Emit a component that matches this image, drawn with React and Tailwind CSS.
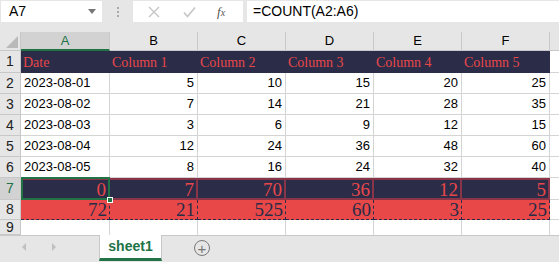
import React from "react";

const cols = ["A", "B", "C", "D", "E", "F"];
const widths = ["w-[89px]", "w-[88px]", "w-[88px]", "w-[88px]", "w-[88px]", "w-[88px]"];

const data = [
    ["2023-08-01", 5, 10, 15, 20, 25],
    ["2023-08-02", 7, 14, 21, 28, 35],
    ["2023-08-03", 3, 6, 9, 12, 15],
    ["2023-08-04", 12, 24, 36, 48, 60],
    ["2023-08-05", 8, 16, 24, 32, 40],
];
const totals = [0, 7, 70, 36, 12, 5];
const products = [72, 21, 525, 60, 3, 25];

const sans = { fontFamily: "'Liberation Sans', Arial, sans-serif" };
const serif = { fontFamily: "'Liberation Serif', 'Times New Roman', serif" };

function RowHead({ n, active }) {
    return (
        <div className={`w-[21px] shrink-0 flex items-center justify-center border-r border-b border-[#c8c8c8] text-[14px] ${active ? "bg-[#d2d2d2] text-[#217346]" : "bg-[#e6e6e6] text-[#222]"}`}>
            {n}
        </div>
    );
}

export default function App() {
    return (
        <div className="w-[559px] h-[262px] overflow-hidden bg-white text-black relative" style={sans}>
            {/* formula bar */}
            <div className="h-[32px] bg-[#e6e6e6] flex items-start pt-[1px]">
                <div className="w-[101px] h-[21px] ml-[1px] bg-white flex items-center justify-between pl-[8px] pr-[6px] text-[14px]">
                    <span>A7</span>
                    <span className="w-0 h-0 border-l-[4px] border-r-[4px] border-t-[5px] border-l-transparent border-r-transparent border-t-[#777]" />
                </div>
                <div className="w-[31px] h-[21px] flex flex-col items-center justify-center gap-[2px]">
                    <span className="w-[2px] h-[2px] bg-[#aaa]" />
                    <span className="w-[2px] h-[2px] bg-[#aaa]" />
                    <span className="w-[2px] h-[2px] bg-[#aaa]" />
                </div>
                <div className="w-[110px] h-[21px] bg-white flex items-center">
                    <svg width="12" height="12" viewBox="0 0 12 12" className="ml-[15px]">
                        <path d="M1 1 L11 11 M11 1 L1 11" stroke="#c6c6c6" strokeWidth="1.4" />
                    </svg>
                    <svg width="13" height="12" viewBox="0 0 13 12" className="ml-[23px]">
                        <path d="M1 6.5 L4.5 10.5 L12 1.5" stroke="#c6c6c6" strokeWidth="1.6" fill="none" />
                    </svg>
                    <span className="ml-[21px] text-[13px] italic text-[#555]" style={serif}>f<span className="text-[10px]">x</span></span>
                </div>
                <div className="flex-1 h-[21px] ml-[4px] bg-white flex items-center pl-[6px] text-[14px]">=COUNT(A2:A6)</div>
            </div>

            {/* column headers */}
            <div className="flex h-[19px]">
                <div className="w-[21px] shrink-0 bg-[#e6e6e6] border-r border-b border-[#c8c8c8] relative">
                    <svg width="12" height="12" className="absolute right-[2px] bottom-[2px]" viewBox="0 0 12 12">
                        <path d="M12 0 L12 12 L0 12 Z" fill="#b9b9b9" />
                    </svg>
                </div>
                {cols.map((c, i) => (
                    <div key={c} className={`${widths[i]} shrink-0 flex items-center justify-center text-[13px] border-r border-[#c8c8c8] ${i === 0 ? "bg-[#d2d2d2] text-[#217346] border-b-2 border-b-[#217346]" : "bg-[#e6e6e6] border-b"}`}>
                        {c}
                    </div>
                ))}
                <div className="flex-1 bg-[#e6e6e6] border-b border-[#c8c8c8]" />
            </div>

            {/* row 1 */}
            <div className="flex h-[22px]">
                <RowHead n={1} />
                {["Date", "Column 1", "Column 2", "Column 3", "Column 4", "Column 5"].map((t, i) => (
                    <div key={t} className={`${widths[i]} shrink-0 bg-[#2a2c48] text-[#e8474a] text-[14px] flex items-center pl-[2px]`} style={serif}>
                        {t}
                    </div>
                ))}
                <div className="flex-1 border-b border-[#d4d4d4]" />
            </div>

            {data.map((r, ri) => (
                <div key={ri} className="flex h-[21px]">
                    <RowHead n={ri + 2} />
                    {r.map((v, i) => (
                        <div key={i} className={`${widths[i]} shrink-0 border-r border-b border-[#d4d4d4] flex items-center text-[13px] ${i === 0 ? "pl-[3px]" : "justify-end pr-[3px]"}`}>
                            {v}
                        </div>
                    ))}
                    <div className="flex-1 border-b border-[#d4d4d4]" />
                </div>
            ))}

            {/* row 7 */}
            <div className="flex h-[22px]">
                <RowHead n={7} active />
                {totals.map((v, i) => (
                    <div key={i} className={`${widths[i]} shrink-0 bg-[#2a2c48] border-2 border-[#8a3448] ${i > 0 ? "border-l-0" : ""} text-[#e8474a] text-[19px] leading-none flex items-center justify-end pr-[2px]`} style={serif}>
                        {v}
                    </div>
                ))}
                <div className="flex-1 border-b border-[#d4d4d4]" />
            </div>

            {/* row 8 */}
            <div className="flex h-[20px]">
                <RowHead n={8} />
                {products.map((v, i) => (
                    <div key={i} className={`${widths[i]} shrink-0 bg-[#e84848] border-r border-b border-dashed border-[#2a2c48] text-[#2a2c48] text-[19px] leading-none flex items-center justify-end pr-[2px]`} style={serif}>
                        {v}
                    </div>
                ))}
                <div className="flex-1 border-b border-[#d4d4d4]" />
            </div>

            {/* row 9 */}
            <div className="flex h-[15px]">
                <RowHead n={9} />
                {widths.map((w, i) => (
                    <div key={i} className={`${w} shrink-0 border-r border-[#d4d4d4]`} />
                ))}
            </div>

            {/* selection on A7 */}
            <div className="absolute left-[21px] top-[177px] w-[89px] h-[23px] border-2 border-[#217346]" />
            <div className="absolute left-[107px] top-[197px] w-[6px] h-[6px] bg-[#217346] border border-white" />

            {/* sheet tabs */}
            <div className="absolute left-0 right-0 bottom-0 h-[27px] bg-[#e6e6e6] border-t border-[#c8c8c8] flex items-start">
                <span className="ml-[22px] mt-[7px] w-0 h-0 border-t-[4px] border-b-[4px] border-r-[4px] border-t-transparent border-b-transparent border-r-[#c0c0c0]" />
                <span className="ml-[26px] mt-[7px] w-0 h-0 border-t-[4px] border-b-[4px] border-l-[4px] border-t-transparent border-b-transparent border-l-[#c0c0c0]" />
                <div className="ml-[43px] -mt-[1px] w-[63px] h-[26px] bg-white border-l border-r border-[#c8c8c8] border-b-[3px] border-b-[#217346] flex items-center justify-center text-[14px] font-bold text-[#217346]">
                    sheet1
                </div>
                <div className="ml-[32px] mt-[4px] w-[16px] h-[16px] rounded-full border border-[#777] flex items-center justify-center text-[#777] text-[15px] leading-none">
                    +
                </div>
            </div>
        </div>
    );
}
